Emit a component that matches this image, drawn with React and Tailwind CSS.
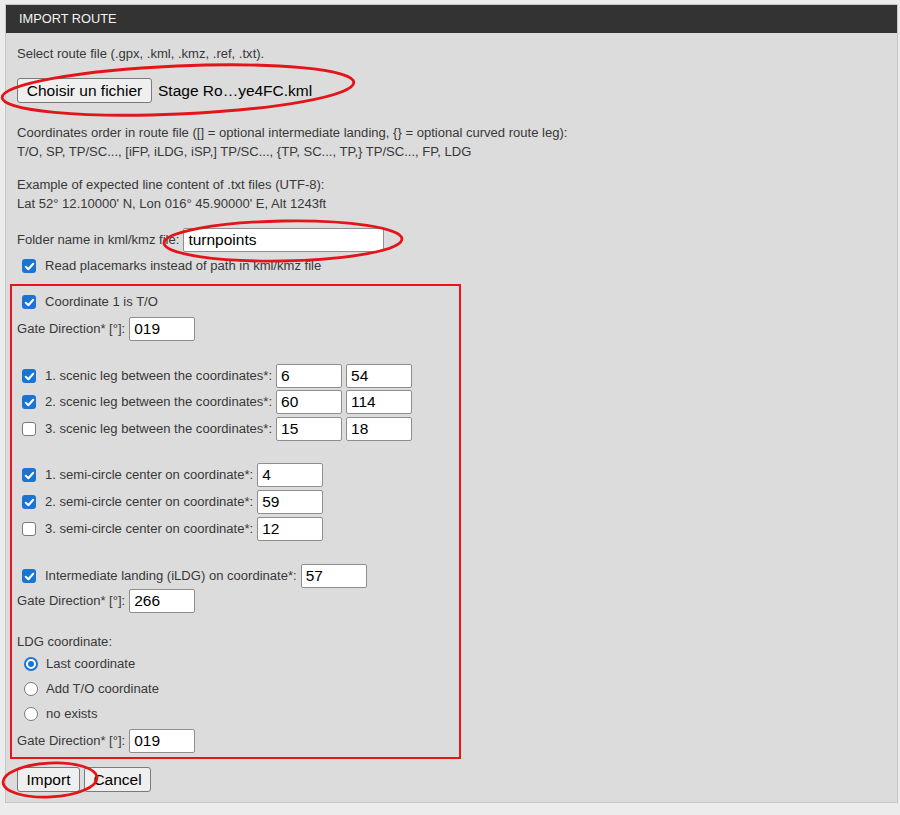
import React from "react";

const FONT = { fontFamily: '"Liberation Sans", Arial, sans-serif' };

function Check({ checked }) {
  if (checked) {
    return (
      <span className="w-[14px] h-[14px] shrink-0 rounded-[3px] bg-[#1a75d2] flex items-center justify-center">
        <svg viewBox="0 0 14 14" className="w-[13px] h-[13px]">
          <path d="M3 7.3 L5.8 10 L11 4" stroke="white" strokeWidth="2.2" fill="none" strokeLinecap="round" strokeLinejoin="round" />
        </svg>
      </span>
    );
  }
  return <span className="w-[14px] h-[14px] shrink-0 rounded-[3px] bg-white border border-[#7a7a7a]" />;
}

function Radio({ checked }) {
  if (checked) {
    return (
      <span className="w-[14px] h-[14px] shrink-0 rounded-full border-2 border-[#1a75d2] bg-white flex items-center justify-center">
        <span className="w-[6px] h-[6px] rounded-full bg-[#1a75d2]" />
      </span>
    );
  }
  return <span className="w-[14px] h-[14px] shrink-0 rounded-full bg-white border border-[#7a7a7a]" />;
}

function Input({ value, w = "w-[66px]" }) {
  return (
    <span className={`${w} h-[24px] bg-white border border-[#8e8e8e] rounded-[2px] pl-[4px] flex items-center text-[15.5px] text-black`}>
      {value}
    </span>
  );
}

function Btn({ children, w }) {
  return (
    <span className={`${w} h-[25px] bg-[#efefef] border border-[#7a7a7a] rounded-[3px] flex items-center justify-center text-[15.5px] text-black`}>
      {children}
    </span>
  );
}

function CheckRow({ checked, label, inputs, mt, inputW = "w-[66px]" }) {
  return (
    <div className={`${mt} h-[24px] flex items-center ml-[5px]`}>
      <Check checked={checked} />
      <span className="ml-[9px]">{label}</span>
      <span className="flex items-center gap-[4px] ml-[4px]">
        {inputs.map((v, i) => (
          <Input key={i} value={v} w={inputW} />
        ))}
      </span>
    </div>
  );
}

function GateRow({ mt, value }) {
  return (
    <div className={`${mt} h-[24px] flex items-center`}>
      <span>Gate Direction* [°]:</span>
      <span className="ml-[4px]">
        <Input value={value} />
      </span>
    </div>
  );
}

export default function App() {
  return (
    <div className="relative min-h-[815px] w-[900px] bg-[#ececec] overflow-hidden text-[13.05px] text-[#383838]" style={FONT}>
      <div className="pt-[4px] pl-[5px]">
        <div className="w-[893px] border border-[#c6c6c6] bg-[#dcdcdc]">
          <div className="h-[28px] bg-[#333333] text-[#f2f2f2] text-[12.8px] pl-[13px] flex items-center">IMPORT ROUTE</div>
          <div className="pl-[11px] pb-[10px]">
            <div className="mt-[11px] h-[20px] flex items-center">Select route file (.gpx, .kml, .kmz, .ref, .txt).</div>
            <div className="mt-[14px] h-[25px] flex items-center">
              <Btn w="w-[135px]">Choisir un fichier</Btn>
              <span className="ml-[6px] text-[15.5px] text-black">Stage Ro…ye4FC.kml</span>
            </div>
            <div className="mt-[20px] h-[19px] flex items-center">
              Coordinates order in route file ([] = optional intermediate landing, {"{}"} = optional curved route leg):
            </div>
            <div className="h-[19px] flex items-center">T/O, SP, TP/SC..., [iFP, iLDG, iSP,] TP/SC..., {"{TP, SC..., TP,}"} TP/SC..., FP, LDG</div>
            <div className="mt-[14px] h-[19px] flex items-center">Example of expected line content of .txt files (UTF-8):</div>
            <div className="h-[19px] flex items-center">Lat 52° 12.10000' N, Lon 016° 45.90000' E, Alt 1243ft</div>
            <div className="mt-[15px] h-[24px] flex items-center">
              <span>Folder name in kml/kmz file:</span>
              <span className="ml-[4px]">
                <Input value="turnpoints" w="w-[201px]" />
              </span>
            </div>
            <div className="mt-[4px] h-[20px] flex items-center ml-[5px]">
              <Check checked />
              <span className="ml-[9px]">Read placemarks instead of path in kml/kmz file</span>
            </div>

            <div className="mt-[8px] -ml-[7px] w-[451px] border-2 border-[#e8151b] pl-[5px] pb-[4px]">
              <div className="mt-[6px] h-[20px] flex items-center ml-[5px]">
                <Check checked />
                <span className="ml-[9px]">Coordinate 1 is T/O</span>
              </div>
              <GateRow mt="mt-[5px]" value="019" />

              <CheckRow mt="mt-[23px]" checked label="1. scenic leg between the coordinates*:" inputs={["6", "54"]} />
              <CheckRow mt="mt-[2px]" checked label="2. scenic leg between the coordinates*:" inputs={["60", "114"]} />
              <CheckRow mt="mt-[3px]" checked={false} label="3. scenic leg between the coordinates*:" inputs={["15", "18"]} />

              <CheckRow mt="mt-[22px]" checked label="1. semi-circle center on coordinate*:" inputs={["4"]} />
              <CheckRow mt="mt-[3px]" checked label="2. semi-circle center on coordinate*:" inputs={["59"]} />
              <CheckRow mt="mt-[3px]" checked={false} label="3. semi-circle center on coordinate*:" inputs={["12"]} />

              <CheckRow mt="mt-[23px]" checked label="Intermediate landing (iLDG) on coordinate*:" inputs={["57"]} />
              <GateRow mt="mt-[1px]" value="266" />

              <div className="mt-[19px] h-[20px] flex items-center">LDG coordinate:</div>
              <div className="mt-[2px] h-[20px] flex items-center ml-[7px]">
                <Radio checked />
                <span className="ml-[8px]">Last coordinate</span>
              </div>
              <div className="mt-[5px] h-[20px] flex items-center ml-[7px]">
                <Radio checked={false} />
                <span className="ml-[8px]">Add T/O coordinate</span>
              </div>
              <div className="mt-[5px] h-[20px] flex items-center ml-[7px]">
                <Radio checked={false} />
                <span className="ml-[8px]">no exists</span>
              </div>
              <GateRow mt="mt-[5px]" value="019" />
            </div>

            <div className="mt-[8px] flex items-center gap-[4px]">
              <Btn w="w-[63px]">Import</Btn>
              <Btn w="w-[67px]">Cancel</Btn>
            </div>
          </div>
        </div>
      </div>

      <svg className="absolute inset-0 pointer-events-none" width="900" height="815" viewBox="0 0 900 815">
        <ellipse cx="178" cy="90" rx="176" ry="24" transform="rotate(-2.5 178 90)" fill="none" stroke="#e3141a" strokeWidth="2.8" />
        <ellipse cx="283" cy="241" rx="119" ry="20" transform="rotate(-1 283 241)" fill="none" stroke="#e3141a" strokeWidth="2.8" />
        <ellipse cx="50" cy="780" rx="47" ry="17" transform="rotate(-3 50 780)" fill="none" stroke="#e3141a" strokeWidth="2.8" />
      </svg>
    </div>
  );
}
